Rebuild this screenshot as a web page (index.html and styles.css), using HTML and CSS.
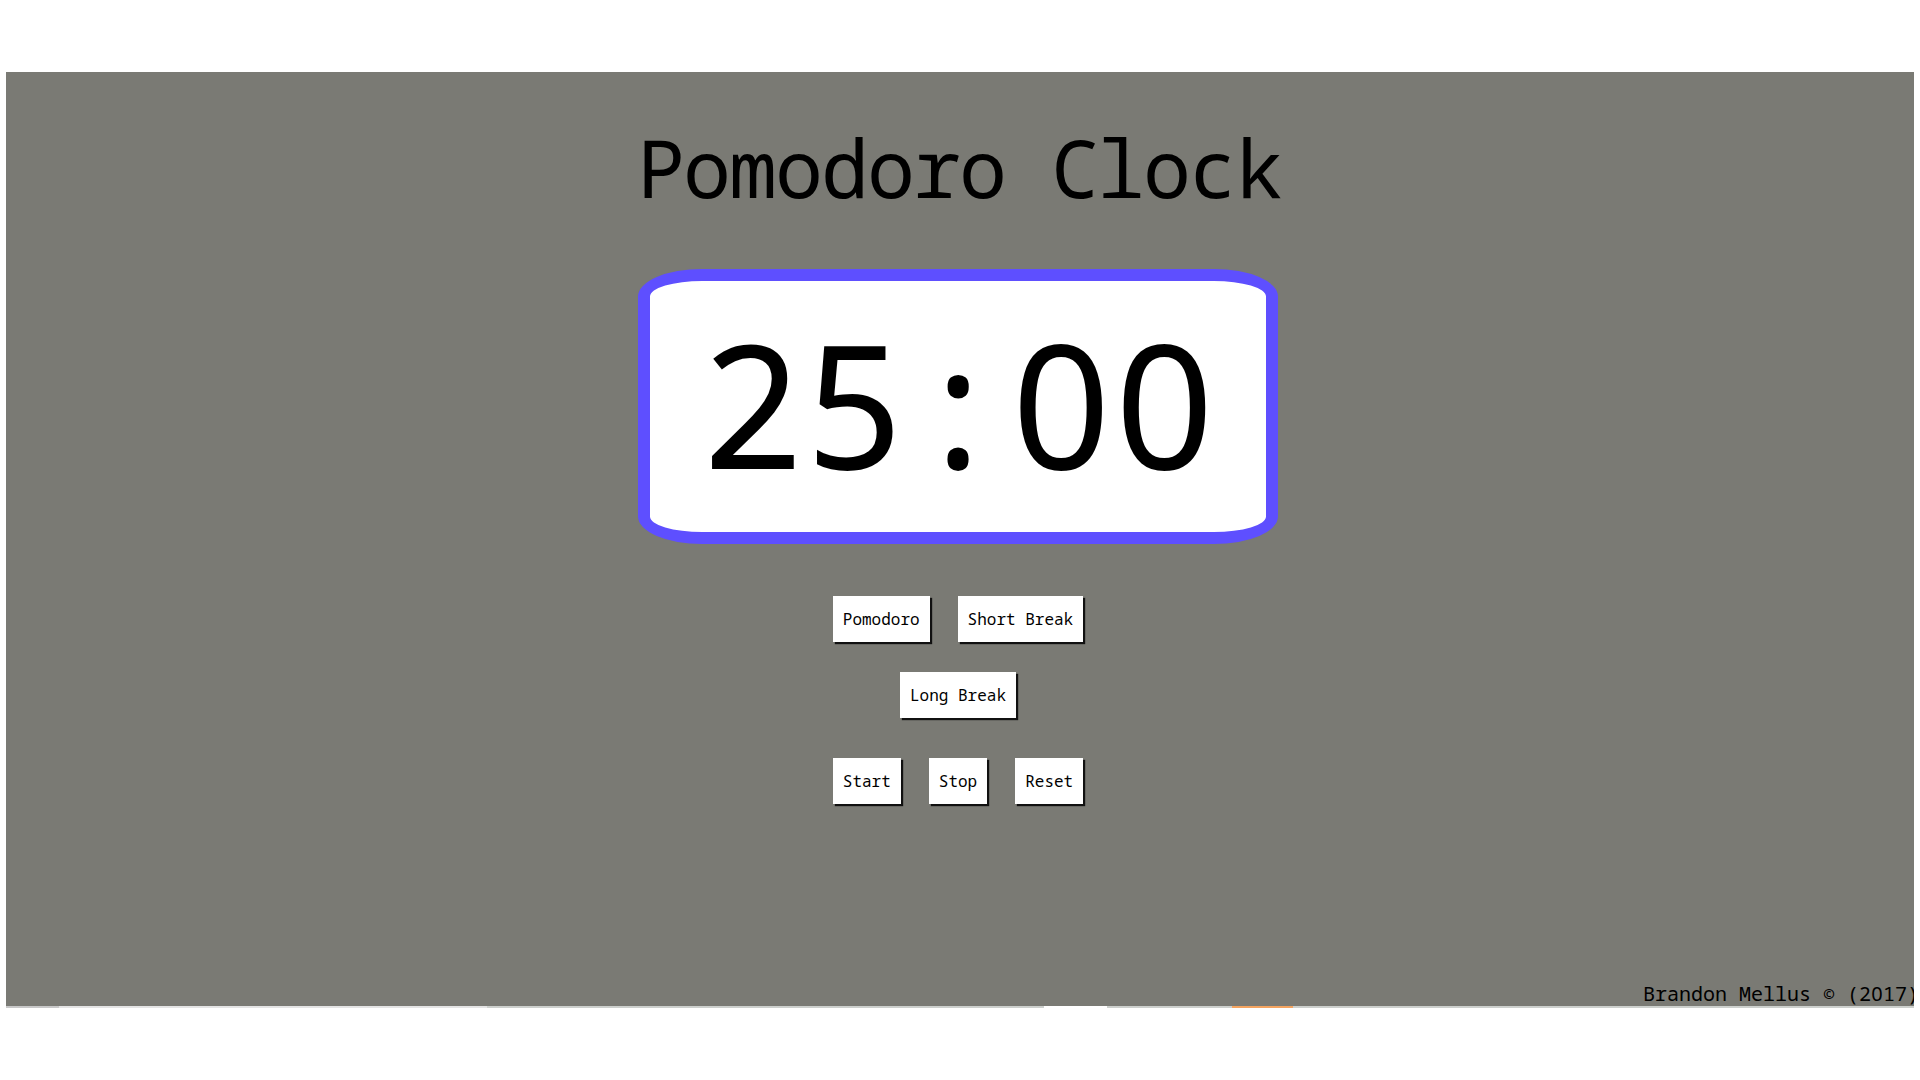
FILE: index.html
```html
<!DOCTYPE html>
<html lang="en">
<head>
<meta charset="utf-8">
<title>Pomodoro Clock</title>
<link rel="stylesheet" href="styles.css">
</head>
<body>
<div class="page">
  <div class="content">
    <h1 class="title">Pomodoro Clock</h1>
    <div class="clock"><span class="time">25:<span class="zero">0</span><span class="zero">0</span></span></div>
    <div class="row row-1">
      <button class="btn">Pomodoro</button>
      <button class="btn">Short Break</button>
    </div>
    <div class="row row-2">
      <button class="btn">Long Break</button>
    </div>
    <div class="row row-3">
      <button class="btn">Start</button>
      <button class="btn">Stop</button>
      <button class="btn">Reset</button>
    </div>
  </div>
  <footer class="footer">Brandon Mellus © (2<span class="zero">0</span>17)</footer>
</div>
<div class="strip">
  <span class="seg seg-a"></span>
  <span class="seg seg-b"></span>
  <span class="seg seg-c"></span>
  <span class="seg seg-d"></span>
  <span class="seg seg-e"></span>
  <span class="seg seg-f"></span>
  <span class="seg seg-g"></span>
</div>
</body>
</html>
```
FILE: styles.css
```css
html, body {
  margin: 0;
  padding: 0;
  background: #ffffff;
}

body {
  font-family: "Noto Sans Mono", "Liberation Mono", monospace;
  color: #000;
}

.page {
  margin: 72px 6px 0 6px;
  height: 934px;
  background: #7a7a74;
  display: flex;
  flex-direction: column;
  overflow: hidden;
}

.content {
  display: flex;
  flex-direction: column;
  align-items: center;
  padding-top: 48px;
  padding-right: 4px;
}

.title {
  margin: 0;
  font-size: 80px;
  font-weight: normal;
  letter-spacing: -2px;
  line-height: 93px;
  height: 93px;
  padding-left: 2px;
}

.clock {
  margin-top: 56px;
  box-sizing: border-box;
  width: 640px;
  height: 275px;
  border: 12px solid #5e4fff;
  border-radius: 10%;
  background: #ffffff;
  display: flex;
  justify-content: center;
  padding-top: 21px;
}

.time {
  font-size: 172px;
  line-height: 200px;
  height: 200px;
  white-space: nowrap;
}

.zero {
  display: inline-block;
  width: 0.6em;
  text-align: center;
  font-family: "Noto Sans", "Open Sans", sans-serif;
}

.row {
  display: flex;
  justify-content: center;
  gap: 28px;
}

.row-1 { margin-top: 52px; }
.row-2 { margin-top: 30px; }
.row-3 { margin-top: 40px; }

.btn {
  font-family: "Noto Sans Mono", "Liberation Mono", monospace;
  font-size: 16px;
  line-height: 20px;
  padding: 13px 10px;
  margin: 0;
  border: none;
  background: #ffffff;
  color: #000;
  box-shadow: 2px 2px 1px #111;
  border-radius: 0;
}

.footer {
  margin-top: auto;
  margin-right: -5px;
  text-align: right;
  font-size: 20px;
  line-height: 24px;
  white-space: nowrap;
}

.strip {
  margin: 0 6px;
  height: 2px;
  display: flex;
}

.seg { display: block; height: 2px; }
.seg-a { width: 53px; background: #c8c8c8; }
.seg-b { width: 428px; background: #e4e4e4; }
.seg-c { width: 557px; background: #cdd0cd; }
.seg-d { width: 63px; background: #ffffff; }
.seg-e { width: 125px; background: #cdd0cd; }
.seg-f { width: 61px; background: #f4a460; }
.seg-g { flex: 1; background: #cdd0cd; }
```
